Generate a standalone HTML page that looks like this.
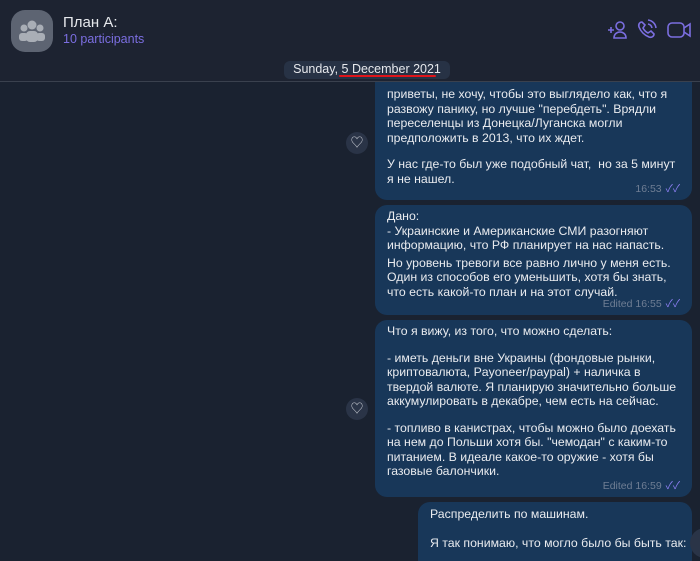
<!DOCTYPE html><html><head><meta charset="utf-8"><style>
html,body{margin:0;width:700px;height:561px;overflow:hidden}
body{background:#1a2230;font-family:"Liberation Sans","Noto Sans CJK SC",sans-serif;position:relative}
.hdr{position:absolute;left:0;top:0;width:700px;height:81px;background:#1d2331;border-bottom:1px solid #3a414e}
.av{position:absolute;left:11px;top:10px;width:42px;height:42px;border-radius:14px;background:#5d6472}
.name{position:absolute;left:63px;top:14px;color:#e6e8ec;font-size:15px}
.sub{position:absolute;left:63px;top:32px;color:#7b6ee0;font-size:12.5px}
.date{position:absolute;left:284px;top:61px;width:166px;height:18px;background:#273245;border-radius:6px;color:#e6e8ec;font-size:12.5px;text-align:center;line-height:17px}
.red{position:absolute;left:339px;top:75px;width:97px;height:2px;background:#e0141a;border-radius:1px}
.b{position:absolute;background:#183759;border-radius:12px;color:#e9ebef;font-size:12.3px;line-height:14.5px;padding:4px 12px 0 12px;box-sizing:border-box;white-space:nowrap}
.b p{margin:0}
.t{position:absolute;right:12px;bottom:4px;color:#6f7e94;font-size:10.5px}
.t span{color:#8a7ef0;margin-left:4px}
.h{position:absolute;width:22px;height:22px;border-radius:50%;background:#2a3447;color:#c6cad2;font-size:13px;text-align:center;line-height:22px}
</style></head><body>
<div class="hdr">
<div class="av"><svg width="42" height="42" viewBox="0 0 42 42"><circle cx="21" cy="15" r="4.5" fill="#a9aeb6"/><circle cx="13" cy="18" r="3.5" fill="#a9aeb6"/><circle cx="29" cy="18" r="3.5" fill="#a9aeb6"/><rect x="15" y="21" width="12" height="11" rx="4" fill="#a9aeb6"/><rect x="8" y="23" width="9" height="8" rx="3" fill="#a9aeb6"/><rect x="25" y="23" width="9" height="8" rx="3" fill="#a9aeb6"/></svg></div>
<div class="name">План А:</div><div class="sub">10 participants</div>
<svg style="position:absolute;left:606px;top:18px" width="90" height="24" viewBox="0 0 90 24" fill="none" stroke="#7b6ee0" stroke-width="1.6"><path d="M2 12h6M5 9v6"/><circle cx="14" cy="8" r="4"/><path d="M8 20c0-4 3-6 6-6s6 2 6 6z"/><path d="M36 4c-2 0-4 2-3 5 2 5 5 8 10 10 3 1 5-1 5-3l-3-3-3 2c-2-1-4-3-5-5l2-3z"/><path d="M42 6a5 5 0 0 1 4 4M42 2a9 9 0 0 1 8 8"/><rect x="62" y="5" width="16" height="14" rx="4"/><path d="M78 10l6-4v12l-6-4"/></svg>
</div>
<div class="date">Sunday, 5 December 2021</div><div class="red"></div>
<div class="b" style="left:375px;top:82px;width:317px;height:118px;border-radius:0 0 12px 12px;padding-top:5px"><p>приветы, не хочу, чтобы это выглядело как, что я<br>развожу панику, но лучше "перебдеть". Врядли<br>переселенцы из Донецка/Луганска могли<br>предположить в 2013, что их ждет.</p><p style="margin-top:12px">У нас где-то был уже подобный чат, &nbsp;но за 5 минут<br>я не нашел.</p><div class="t">16:53<span>✓✓</span></div></div>
<div class="h" style="left:346px;top:132px">♡</div>
<div class="b" style="left:375px;top:205px;width:317px;height:110px"><p>Дано:<br>- Украинские и Американские СМИ разогняют<br>информацию, что РФ планирует на нас напасть.</p><p style="margin-top:3px">Но уровень тревоги все равно лично у меня есть.<br>Один из способов его уменьшить, хотя бы знать,<br>что есть какой-то план и на этот случай.</p><div class="t">Edited 16:55<span>✓✓</span></div></div>
<div class="b" style="left:375px;top:320px;width:317px;height:177px"><p>Что я вижу, из того, что можно сделать:</p><p style="margin-top:12px">- иметь деньги вне Украины (фондовые рынки,<br>криптовалюта, Payoneer/paypal) + наличка в<br>твердой валюте. Я планирую значительно больше<br>аккумулировать в декабре, чем есть на сейчас.</p><p style="margin-top:12px">- топливо в канистрах, чтобы можно было доехать<br>на нем до Польши хотя бы. "чемодан" с каким-то<br>питанием. В идеале какое-то оружие - хотя бы<br>газовые балончики.</p><div class="t">Edited 16:59<span>✓✓</span></div></div>
<div class="h" style="left:346px;top:398px">♡</div>
<div class="b" style="left:418px;top:502px;width:274px;height:70px;padding-top:5px"><p>Распределить по машинам.</p><p style="margin-top:14px">Я так понимаю, что могло было бы быть так:</p></div>
<div class="h" style="left:690px;top:528px;width:30px;height:30px"></div>
</body></html>
